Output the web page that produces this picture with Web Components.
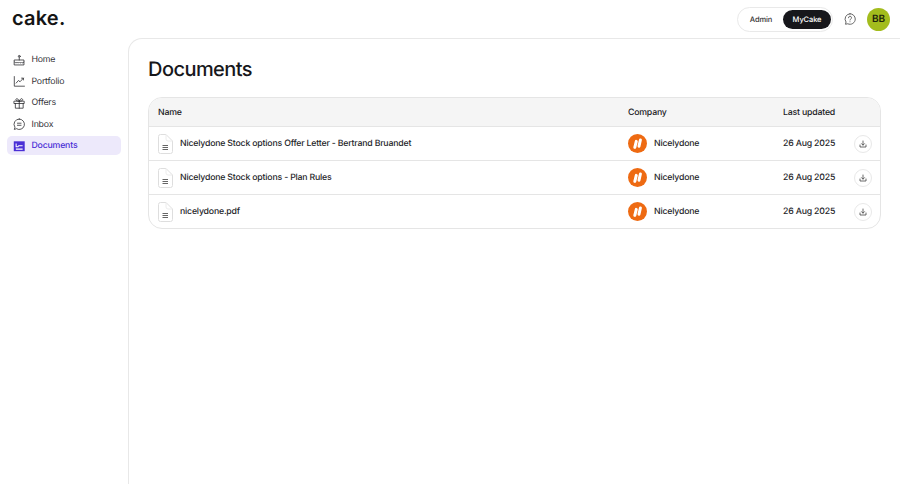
<!DOCTYPE html>
<html>
<head>
<meta charset="utf-8">
<title>Documents</title>
<style>
  html, body { margin: 0; height: 100%; background: #fff; }
  body { font-family: Inter, "Liberation Sans", sans-serif; color: #1b1b1f; overflow: hidden; text-rendering: geometricPrecision; }
</style>
</head>
<body>
<app-shell>
  <top-bar slot="top"></top-bar>
  <side-nav slot="side"></side-nav>
  <docs-page>
    <doc-row name="Nicelydone Stock options Offer Letter - Bertrand Bruandet" company="Nicelydone" date="26 Aug 2025"></doc-row>
    <doc-row name="Nicelydone Stock options - Plan Rules" company="Nicelydone" date="26 Aug 2025"></doc-row>
    <doc-row name="nicelydone.pdf" company="Nicelydone" date="26 Aug 2025"></doc-row>
  </docs-page>
</app-shell>
<script>
(() => {
    // page frame: header on top, nav on the left, content panel on the right
    class AppShell extends HTMLElement {
        constructor () {
            super()
            this.attachShadow({ mode: 'open' })
            this.shadowRoot.innerHTML = `
                <style>
                    :host { display: flex; flex-direction: column; height: 484px; overflow: hidden; }
                    .body { flex: 1; display: flex; min-height: 0; }
                    .panel {
                        flex: 1;
                        border: 1px solid #e8e8e8;
                        border-right: 0;
                        border-bottom: 0;
                        border-top-left-radius: 14px;
                    }
                </style>
                <slot name="top"></slot>
                <div class="body">
                    <slot name="side"></slot>
                    <div class="panel"><slot></slot></div>
                </div>
            `
        }
    }

    class TopBar extends HTMLElement {
        constructor () {
            super()
            this.attachShadow({ mode: 'open' })
            this.shadowRoot.innerHTML = `
                <style>
                    :host { display: flex; align-items: center; height: 38px; padding: 0 10px 0 12px; }
                    .logo { font-size: 20px; font-weight: 600; letter-spacing: 0.2px; color: #151515; line-height: 38px; margin-top: -2px; }
                    .switch {
                        margin-left: auto;
                        display: flex;
                        align-items: center;
                        height: 23px;
                        padding: 0 1px;
                        border: 1px solid #e9e9e9;
                        border-radius: 13px;
                        font-size: 7.5px;
                        font-weight: 500;
                        letter-spacing: -0.1px;
                    }
                    .switch span { line-height: 19px; border-radius: 10px; color: #333; text-align: center; }
                    .switch .off { width: 44px; }
                    .switch .on { width: 48px; background: #17171b; color: #fff; }
                    .help { margin-left: 11px; width: 12px; height: 12px; display: block; }
                    .avatar {
                        margin-left: 11px;
                        width: 23px;
                        height: 23px;
                        border-radius: 50%;
                        background: #a3bc1d;
                        color: #20230c;
                        font-size: 10px;
                        font-weight: 600;
                        display: flex;
                        align-items: center;
                        justify-content: center;
                    }
                </style>
                <div class="logo">cake.</div>
                <div class="switch"><span class="off">Admin</span><span class="on">MyCake</span></div>
                <svg class="help" viewBox="0 0 24 24" fill="none" stroke="#555" stroke-width="1.8" stroke-linecap="round" stroke-linejoin="round">
                    <path d="M12 1.500a10.500 10.500 0 0 1 10.500 10.500 10.500 10.500 0 0 1-15 9.500L3 22.500l1.100-4.500A10.500 10.500 0 0 1 12 1.500z"/>
                    <path d="M9 9.500a3 3 0 1 1 4.300 2.700c-.9.500-1.300 1-1.300 1.800"/>
                    <path d="M12 17.500h.01"/>
                </svg>
                <div class="avatar">BB</div>
            `
        }
    }

    const navIcons = {
        home: '<path d="M3 11.500h18V21H3z"/><path d="M3 15.500c3 2 3.500 2 4.500 0 1.500 2 3 2 4.500 0 1.500 2 3 2 4.500 0 1 2 1.500 2 4.500 0"/><path d="M12 11.500V7"/><circle cx="12" cy="4.500" r="1.800"/>',
        chart: '<path d="M2.500 3v18.500H22"/><path d="M6 15.500l4.500-5 3 2.500 6.500-7"/><path d="M16.500 6H20v3.500"/>',
        gift: '<rect x="2.500" y="8" width="19" height="4.500"/><path d="M4.500 12.500V21.500h15v-9"/><path d="M12 8v13.500"/><path d="M12 8C10 2 5.500 2 5.500 5.500c0 2 3.500 2.500 6.500 2.500zM12 8c2-6 6.500-6 6.500-2.500 0 2-3.500 2.500-6.500 2.500z"/>',
        inbox: '<path d="M12 2a10 10 0 1 1-5.300 18.500L2.500 22l1.300-4.300A10 10 0 0 1 12 2z"/><path d="M8.500 10h7M8.500 14h7"/>'
    }

    class NavItem extends HTMLElement {
        constructor () {
            super()
            this.attachShadow({ mode: 'open' })
        }

        connectedCallback() {
            const active = this.hasAttribute('active')
            const icon = active
                ? `<svg viewBox="0 0 24 24"><path fill="#4a2fd6" d="M1.500 2.500h21v19h-21z"/><path fill="none" stroke="#fff" stroke-width="2" d="M5.500 17.500h13M6 6.500v6.500h3.500l1.500-2h7.500"/></svg>`
                : `<svg viewBox="0 0 24 24" fill="none" stroke="#2a2a2e" stroke-width="1.500" stroke-linecap="round" stroke-linejoin="round">${navIcons[this.getAttribute('icon')]}</svg>`
            this.shadowRoot.innerHTML = `
                <style>
                    :host {
                        display: flex;
                        align-items: center;
                        gap: 6.500px;
                        height: 19px;
                        box-sizing: border-box;
                        padding: 1px 0 0 5.500px;
                        border-radius: 5px;
                        font-size: 8.750px;
                        letter-spacing: -0.2px;
                        color: #333338;
                    }
                    :host([active]) { background: #ede9fb; color: #4a2fd6; font-weight: 500; }
                    svg { width: 12.500px; height: 12.500px; display: block; flex: none; }
                </style>
                ${icon}
                <slot></slot>
            `
        }
    }

    class SideNav extends HTMLElement {
        constructor () {
            super()
            this.attachShadow({ mode: 'open' })
            this.shadowRoot.innerHTML = `
                <style>
                    :host { display: flex; flex-direction: column; gap: 2.500px; width: 114px; padding: 12px 7px 0; flex: none; }
                </style>
                <nav-item icon="home">Home</nav-item>
                <nav-item icon="chart">Portfolio</nav-item>
                <nav-item icon="gift">Offers</nav-item>
                <nav-item icon="inbox">Inbox</nav-item>
                <nav-item active>Documents</nav-item>
            `
        }
    }

    class DocsPage extends HTMLElement {
        constructor () {
            super()
            this.attachShadow({ mode: 'open' })
            this.shadowRoot.innerHTML = `
                <style>
                    :host { display: block; padding: 17px 19px 0 19px; }
                    h1 { margin: 0 0 14px; font-size: 20px; line-height: 27px; letter-spacing: -0.55px; font-weight: 500; color: #17171b; }
                    .table { border: 1px solid #e5e5e5; border-radius: 14px; overflow: hidden; }
                    .head {
                        display: grid;
                        grid-template-columns: 470px 155px 1fr;
                        height: 27px;
                        padding-top: 1px;
                        align-items: center;
                        padding-left: 9px;
                        background: #f5f5f5;
                        font-size: 8.750px;
                        font-weight: 500;
                        letter-spacing: -0.2px;
                    }
                    ::slotted(doc-row) { border-top: 1px solid #e5e5e5; }
                </style>
                <h1>Documents</h1>
                <div class="table">
                    <div class="head"><div>Name</div><div>Company</div><div>Last updated</div></div>
                    <slot></slot>
                </div>
            `
        }
    }

    class DocRow extends HTMLElement {
        constructor () {
            super()
            this.attachShadow({ mode: 'open' })
        }

        connectedCallback() {
            this.shadowRoot.innerHTML = `
                <style>
                    :host {
                        display: grid;
                        grid-template-columns: 470px 155px 71px 1fr;
                        height: 33px;
                        align-items: center;
                        padding-left: 9px;
                        font-size: 8.750px;
                        font-weight: 500;
                        letter-spacing: -0.2px;
                        color: #26262a;
                    }
                    .name, .company { display: flex; align-items: center; }
                    .file { width: 15px; height: 20px; margin-right: 7px; display: block; }
                    .mark { width: 19px; height: 19px; margin-right: 7px; display: block; }
                    .dl {
                        width: 16px;
                        height: 16px;
                        border: 1px solid #e8e8e8;
                        border-radius: 50%;
                        display: flex;
                        align-items: center;
                        justify-content: center;
                        justify-self: start;
                    }
                    .dl svg { width: 8px; height: 8px; display: block; }
                </style>
                <div class="name">
                    <svg class="file" viewBox="0 0 15 20" fill="none">
                        <path d="M.5 2.500A2 2 0 0 1 2.500.5H8L14.500 7V17.500a2 2 0 0 1-2 2h-10a2 2 0 0 1-2-2z" stroke="#dedede"/>
                        <path d="M8 .5V5a2 2 0 0 0 2 2h4.500" stroke="#ececec"/>
                        <path d="M4.500 11.500h5.500M4.500 13.500h5.500M4.500 15.500h5.500" stroke="#666" stroke-width="1"/>
                    </svg>
                    <span>${this.getAttribute('name')}</span>
                </div>
                <div class="company">
                    <svg class="mark" viewBox="0 0 19 19">
                        <circle cx="9.500" cy="9.500" r="9.500" fill="#ee6a12"/>
                        <path d="M6.800 13.400 8.300 7.400M11 12.200 12.400 6" fill="none" stroke="#fff" stroke-width="3" stroke-linecap="round"/>
                    </svg>
                    <span>${this.getAttribute('company')}</span>
                </div>
                <div>${this.getAttribute('date')}</div>
                <div class="dl">
                    <svg viewBox="0 0 24 24" fill="none" stroke="#444" stroke-width="2.400" stroke-linecap="round" stroke-linejoin="round">
                        <path d="M3 15v6h18v-6"/>
                        <path d="M12 3v12M7.500 11l4.500 4.500 4.500-4.500"/>
                    </svg>
                </div>
            `
        }
    }

    customElements.define('nav-item', NavItem)
    customElements.define('side-nav', SideNav)
    customElements.define('top-bar', TopBar)
    customElements.define('doc-row', DocRow)
    customElements.define('docs-page', DocsPage)
    customElements.define('app-shell', AppShell)
})()
</script>
</body>
</html>
